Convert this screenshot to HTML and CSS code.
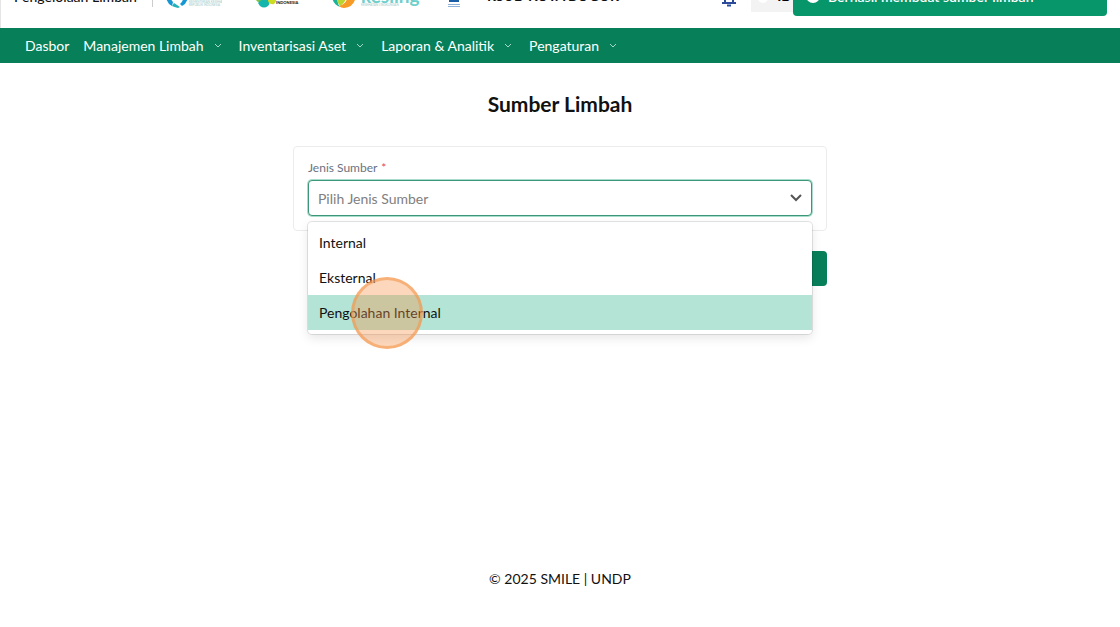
FILE: index.html
```html
<!DOCTYPE html>
<html lang="id">
<head>
  <meta charset="UTF-8" />
  <meta name="viewport" content="width=device-width, initial-scale=1" />
  <title>Sumber Limbah</title>
  <link rel="stylesheet" href="styles.css">
</head>
<body>

  <!-- Top bar, partly scrolled out of view -->
  <header class="topbar">
    <div class="topbar-inner">
      <span class="app-name">Pengelolaan Limbah</span>
      <div class="logos">
        <svg class="logo-health" viewBox="0 0 56 40" aria-hidden="true">
          <path d="M0 20 Q0 28 6 31 L7 27 Q4 24 5 20 Z" fill="#1597d4" />
          <path d="M8 28 L14 32 L12 33 Q8 32 6 31 Z" fill="#20b2b8" />
          <path d="M22 20 Q22 28 16 31 L14 29 Q18 26 17 20 Z" fill="#1597d4" />
          <text x="23" y="28" class="logo-caption">KEMENTERIAN KESEHATAN</text>
          <text x="23" y="31" class="logo-caption">REPUBLIK INDONESIA</text>
        </svg>
        <svg class="logo-indonesia" viewBox="0 0 52 40" aria-hidden="true">
          <circle cx="9" cy="24" r="3" fill="#7cc142" />
          <path d="M8 28 Q10 24 18 24 Q21 28 18 31 Q14 34 10 31 Z" fill="#14b5ab" />
          <path d="M18 22 H26 Q27 27 24 29 Q20 30 18 26 Z" fill="#cbdc22" />
          <text x="26" y="29" class="logo-label">INDONESIA</text>
        </svg>
        <svg class="logo-kesling" viewBox="0 0 90 40" aria-hidden="true">
          <path d="M2 20 Q2 29 10 32 Q6 27 8 20 Z" fill="#18b39a" />
          <path d="M8 20 Q6 27 10 31 Q17 27 16 20 Z" fill="#b9d532" />
          <path d="M26 20 Q25 32 14 33 Q11 33 9 31 Q17 29 18 20 Z" fill="#f79a26" />
          <text x="31" y="28" class="logo-word">kesling</text>
          <text x="31" y="31" class="logo-caption">KESEHATAN LINGKUNGAN</text>
        </svg>
        <svg class="logo-undp" viewBox="0 0 12 40" aria-hidden="true">
          <rect x="1" y="7" width="10" height="20" fill="#1c5da8" />
          <path d="M0 29.500 H12 M0 31.500 H12" stroke="#8fb1d8" />
        </svg>
      </div>
      <span class="facility">RSUD KOTA BOGOR</span>
      <div class="tools">
        <button type="button" class="bell" aria-label="Notifikasi">
          <svg viewBox="0 0 16 24" fill="none" aria-hidden="true">
            <path d="M1 20 H15 M4 19 V12 A4 4 0 0 1 12 12 V19" />
            <path d="M6 22.500 H10" />
          </svg>
        </button>
        <button type="button" class="lang"><span class="flag"></span>ID</button>
      </div>
    </div>
  </header>

  <div class="toast" role="status">
    <svg viewBox="0 0 16 16" aria-hidden="true">
      <circle cx="8" cy="8" r="7" />
    </svg>
    Berhasil membuat sumber limbah
  </div>

  <nav class="menu">
    <a href="#">Dasbor</a>
    <a href="#" class="has-sub">Manajemen Limbah
      <svg viewBox="0 0 8 8" aria-hidden="true"><path d="M1 3 L4 6 L7 3" /></svg>
    </a>
    <a href="#" class="has-sub">Inventarisasi Aset
      <svg viewBox="0 0 8 8" aria-hidden="true"><path d="M1 3 L4 6 L7 3" /></svg>
    </a>
    <a href="#" class="has-sub">Laporan &amp; Analitik
      <svg viewBox="0 0 8 8" aria-hidden="true"><path d="M1 3 L4 6 L7 3" /></svg>
    </a>
    <a href="#" class="has-sub">Pengaturan
      <svg viewBox="0 0 8 8" aria-hidden="true"><path d="M1 3 L4 6 L7 3" /></svg>
    </a>
  </nav>

  <main>
    <h1>Sumber Limbah</h1>

    <form>
      <div class="card">
        <label for="source-type">Jenis Sumber <span class="required">*</span></label>
        <div class="select-wrap">
          <select id="source-type" name="source-type">
            <option value="">Pilih Jenis Sumber</option>
          </select>
          <svg class="chevron" viewBox="0 0 16 16" aria-hidden="true"><path d="M3 6 L8 11 L13 6" /></svg>

          <ul class="options" role="listbox" aria-label="Jenis Sumber">
            <li role="option">Internal</li>
            <li role="option">Eksternal</li>
            <li role="option" class="active">Pengolahan Internal<span class="click-marker"></span></li>
          </ul>
        </div>
      </div>
      <button type="submit" class="save">Simpan</button>
    </form>
  </main>

  <footer>© 2025 SMILE | UNDP</footer>

</body>
</html>
```
FILE: styles.css
```css
:root {
  --green: #07805a;
  --green-toast: #069669;
  --green-light: #b3e4d5;
  --border: #ececec;
}

* {
  box-sizing: border-box;
  font-family: Lato, sans-serif;
}

body {
  margin: 0;
  min-height: 100vh;
  display: flex;
  flex-direction: column;
  background: #fff;
  color: #111;
  font-size: 14px;
}

/* Top bar */
.topbar {
  display: flex;
  align-items: flex-end;
  height: 28px;
  overflow: hidden;
  border-left: 1px solid #e5e5e5;
}

.topbar-inner {
  flex: 1;
  display: flex;
  align-items: center;
  height: 66px;
  padding-left: 13px;
}

.app-name {
  padding: 4px 15px 0 0;
  border-right: 1px solid #ccc;
  font-size: 14px;
  font-weight: 500;
  line-height: 20px;
}

.logos {
  display: flex;
  gap: 28px;
  margin-left: 13px;
}

.logos svg {
  height: 40px;
}

.logo-health {
  width: 56px;
}

.logo-indonesia {
  width: 52px;
}

.logo-kesling {
  width: 90px;
}

.logo-undp {
  width: 12px;
}

.logo-caption {
  font-size: 3px;
  fill: #9cc9c9;
}

.logo-label {
  font-size: 4px;
  font-weight: 900;
  fill: #222;
}

.logo-word {
  font-size: 19px;
  font-weight: 700;
  fill: #6fcfcb;
}

.facility {
  margin-left: 27px;
  font-size: 14px;
  font-weight: 700;
}

.tools {
  display: flex;
  align-items: center;
  gap: 14px;
  margin-left: 102px;
}

.tools button {
  border: 0;
  padding: 0;
}

.tools .bell {
  background: none;
}

.bell svg {
  display: block;
  width: 16px;
  height: 24px;
  stroke: #2c4a9a;
  stroke-width: 2;
}

.tools .lang {
  display: flex;
  align-items: center;
  gap: 8px;
  width: 60px;
  height: 33px;
  padding-left: 6px;
  background: #f3f3f3;
  font-size: 14px;
  font-weight: 700;
}

.flag {
  width: 12px;
  height: 16px;
  border-radius: 50%;
  background: #fff;
}

/* Toast */
.toast {
  position: absolute;
  top: -24px;
  right: 13px;
  width: 314px;
  height: 40px;
  display: flex;
  align-items: center;
  gap: 7px;
  padding: 0 12px;
  border-radius: 4px;
  background: var(--green-toast);
  color: #fff;
  font-weight: 600;
}

.toast svg {
  width: 16px;
  height: 16px;
  fill: #fff;
}

/* Navigation */
.menu {
  display: flex;
  align-items: center;
  gap: 14px;
  height: 35px;
  padding: 0 25px 1px;
  background: var(--green);
}

.menu a {
  display: flex;
  align-items: center;
  gap: 10px;
  color: #fff;
  text-decoration: none;
}

.menu .has-sub {
  margin-right: 3px;
}

.menu svg {
  width: 8px;
  height: 8px;
  fill: none;
  stroke: #a5d8c5;
}

/* Form */
main {
  flex: 1;
  width: 534px;
  max-width: 100%;
  margin: 0 auto;
}

h1 {
  margin: 27px 0 28px;
  font-size: 21px;
  font-weight: 700;
  line-height: 28px;
  text-align: center;
}

.card {
  padding: 13px 14px 14px;
  border: 1px solid var(--border);
  border-radius: 4px;
}

label {
  display: block;
  margin-bottom: 4px;
  font-size: 12px;
  line-height: 16px;
  color: #6b7280;
}

.required {
  margin-left: 1px;
  color: #e5484d;
}

.select-wrap {
  position: relative;
}

select {
  display: block;
  width: 100%;
  height: 36px;
  padding: 0 9px;
  border: 1px solid #3c967a;
  border-radius: 4px;
  box-shadow: 0 0 0 1px #a9dccb;
  outline: none;
  appearance: none;
  background: #fff;
  color: #808080;
  font-size: 14px;
}

.chevron {
  position: absolute;
  top: 9px;
  right: 8px;
  width: 16px;
  height: 16px;
  fill: none;
  stroke: #555;
  stroke-width: 2;
}

.options {
  position: absolute;
  top: 42px;
  left: 0;
  right: 0;
  z-index: 1;
  margin: 0;
  padding: 3px 0 4px;
  border-radius: 4px;
  background: #fff;
  box-shadow: 0 0 0 1px rgba(0, 0, 0, 0.1), 0 4px 11px rgba(0, 0, 0, 0.1);
  list-style: none;
}

.options li {
  position: relative;
  padding: 0 11px;
  line-height: 35px;
}

.options .active {
  background: var(--green-light);
}

/* Click highlight */
.click-marker {
  position: absolute;
  top: -18px;
  left: 43px;
  width: 72px;
  height: 72px;
  border: 3px solid rgba(244, 150, 75, 0.6);
  border-radius: 50%;
  background: rgba(247, 147, 70, 0.37);
}

.save {
  display: block;
  height: 35px;
  margin: 20px 0 0 auto;
  padding: 0 16px;
  border: 0;
  border-radius: 4px;
  background: var(--green);
  color: #fff;
  font-size: 14px;
}

footer {
  padding: 0 16px 38px;
  line-height: 20px;
  text-align: center;
}
```
